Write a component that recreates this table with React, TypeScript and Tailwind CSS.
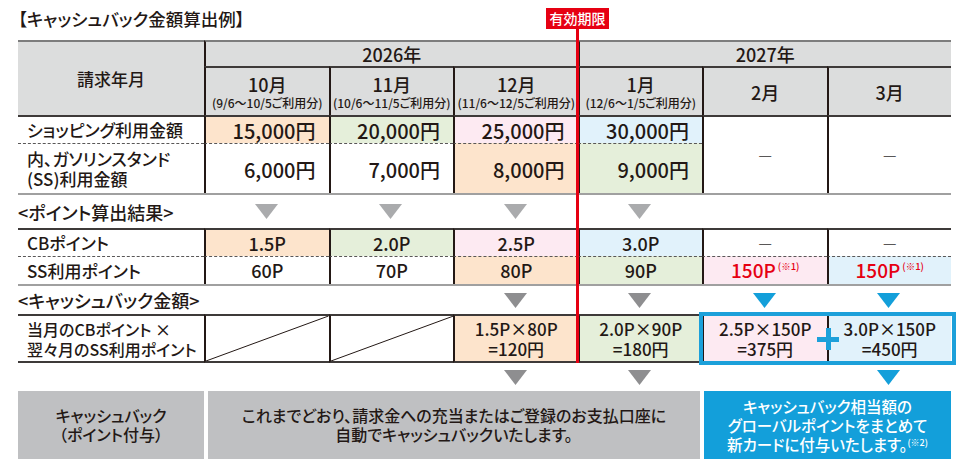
import React from "react";

const INK = "text-[#231815]";
const VL = "border-l-2 border-l-[#231815]";
const T_TOP = "border-t-2 border-t-[#7d7d7d]";
const T_DARK = "border-t-2 border-t-[#3e3a39]";
const T_DASH = "border-t border-t-[#595757] [border-top-style:dashed]";
const T_GRAY = "border-t-2 border-t-[#a0a0a0]";

const ORANGE = "bg-[#fde4cc]";
const GREEN = "bg-[#e5efda]";
const PINK = "bg-[#fdeaf2]";
const BLUE = "bg-[#e1f2fb]";

function Arrow({ color }: { color: string }) {
  return (
    <svg width="23" height="15" viewBox="0 0 23 15">
      <polygon points="0,0 23,0 11.5,15" fill={color} />
    </svg>
  );
}

function Label({ top, children }: { top: string; children: React.ReactNode }) {
  return (
    <div className={`flex items-center whitespace-nowrap pl-[9px] text-[17px] leading-[20px] font-medium ${top}`}>
      {children}
    </div>
  );
}

function Amount({ top, bg, children }: { top: string; bg: string; children: React.ReactNode }) {
  return (
    <div className={`flex items-center justify-end pr-[13px] pt-[2px] text-[20px] font-medium ${VL} ${top} ${bg}`}>
      {children}
    </div>
  );
}

function Pt({ top, bg, children }: { top: string; bg: string; children: React.ReactNode }) {
  return (
    <div className={`flex items-center justify-center text-[18px] font-medium ${VL} ${top} ${bg}`}>
      {children}
    </div>
  );
}

function Dash({ top, span }: { top: string; span?: boolean }) {
  return (
    <div
      className={`flex items-center justify-center text-[15px] text-[#595757] ${VL} ${top} ${
        span ? "row-span-2" : ""
      }`}
    >
      —
    </div>
  );
}

function Red({ top, bg }: { top: string; bg: string }) {
  return (
    <div className={`flex items-center justify-center text-[#e60012] ${VL} ${top} ${bg}`}>
      <span className="text-[19px] font-medium">150P</span>
      <span className="mb-[8px] ml-[2px] text-[9.5px] font-medium">(※1)</span>
    </div>
  );
}

function Formula({ a, b, bg }: { a: string; b: string; bg: string }) {
  return (
    <div
      className={`flex flex-col items-center justify-center text-[17px] leading-[20px] font-medium ${VL} ${T_DARK} border-b-2 border-b-[#3e3a39] ${bg}`}
    >
      <span>{a}</span>
      <span>{b}</span>
    </div>
  );
}

function Diag() {
  return (
    <div className={`relative ${VL} ${T_DARK} border-b-2 border-b-[#3e3a39]`}>
      <svg className="h-full w-full" viewBox="0 0 100 100" preserveAspectRatio="none">
        <line x1="0" y1="100" x2="100" y2="0" stroke="#231815" strokeWidth="1" vectorEffect="non-scaling-stroke" />
      </svg>
    </div>
  );
}

function Month({ m, sub }: { m: string; sub?: string }) {
  return (
    <div className={`flex flex-col items-center justify-center bg-[#dcdddd] ${VL} ${T_DARK}`}>
      <span className="text-[18px] leading-[22px] font-medium">{m}</span>
      {sub && <span className="whitespace-nowrap text-[12px] leading-[15px] font-medium">{sub}</span>}
    </div>
  );
}

const SEC = "flex items-center justify-center";

export default function App() {
  const grayA = "#aaabad";
  const grayB = "#8e8e90";
  const cyan = "#139fda";
  return (
    <div
      className={`relative h-[465px] w-[965px] overflow-hidden bg-white pl-[18px] font-['Noto_Sans_CJK_JP','Noto_Sans',sans-serif] ${INK} [font-feature-settings:'palt']`}
    >
      <div className="h-[40px] pt-[8px] text-[17.5px] leading-[22px] font-medium">【キャッシュバック金額算出例】</div>

      <div className="grid w-[933px] grid-cols-[186px_repeat(6,minmax(0,1fr))] grid-rows-[26px_49px_28px_50px_35px_28px_28px_30px_49px]">
        {/* header */}
        <div className={`row-span-2 flex items-center justify-center bg-[#dcdddd] text-[17px] font-medium ${T_TOP}`}>
          請求年月
        </div>
        <div className={`col-span-3 flex items-center justify-center bg-[#dcdddd] text-[18px] font-medium ${VL} ${T_TOP}`}>
          2026年
        </div>
        <div className={`col-span-3 flex items-center justify-center bg-[#dcdddd] text-[18px] font-medium ${VL} ${T_TOP}`}>
          2027年
        </div>
        <Month m="10月" sub="(9/6〜10/5ご利用分)" />
        <Month m="11月" sub="(10/6〜11/5ご利用分)" />
        <Month m="12月" sub="(11/6〜12/5ご利用分)" />
        <Month m="1月" sub="(12/6〜1/5ご利用分)" />
        <Month m="2月" />
        <Month m="3月" />

        {/* amounts */}
        <Label top={T_DARK}>ショッピング利用金額</Label>
        <Amount top={T_DARK} bg={ORANGE}>15,000円</Amount>
        <Amount top={T_DARK} bg={GREEN}>20,000円</Amount>
        <Amount top={T_DARK} bg={PINK}>25,000円</Amount>
        <Amount top={T_DARK} bg={BLUE}>30,000円</Amount>
        <Dash top={T_DARK} span />
        <Dash top={T_DARK} span />

        <Label top={T_DASH}>
          内、ガソリンスタンド
          <br />
          (SS)利用金額
        </Label>
        <Amount top={T_DASH} bg="bg-white">6,000円</Amount>
        <Amount top={T_DASH} bg="bg-white">7,000円</Amount>
        <Amount top={T_DASH} bg={ORANGE}>8,000円</Amount>
        <Amount top={T_DASH} bg={GREEN}>9,000円</Amount>

        {/* section: points */}
        <div className={`flex items-center pt-[2px] text-[18px] font-medium ${T_GRAY}`}>&lt;ポイント算出結果&gt;</div>
        <div className={`${SEC} ${T_GRAY}`}><Arrow color={grayA} /></div>
        <div className={`${SEC} ${T_GRAY}`}><Arrow color={grayA} /></div>
        <div className={`${SEC} ${T_GRAY}`}><Arrow color={grayA} /></div>
        <div className={`${SEC} ${T_GRAY}`}><Arrow color={grayA} /></div>
        <div className={T_GRAY} />
        <div className={T_GRAY} />

        <Label top={T_DARK}>CBポイント</Label>
        <Pt top={T_DARK} bg={ORANGE}>1.5P</Pt>
        <Pt top={T_DARK} bg={GREEN}>2.0P</Pt>
        <Pt top={T_DARK} bg={PINK}>2.5P</Pt>
        <Pt top={T_DARK} bg={BLUE}>3.0P</Pt>
        <Dash top={T_DARK} />
        <Dash top={T_DARK} />

        <Label top={T_DASH}>SS利用ポイント</Label>
        <Pt top={T_DASH} bg="bg-white">60P</Pt>
        <Pt top={T_DASH} bg="bg-white">70P</Pt>
        <Pt top={T_DASH} bg={ORANGE}>80P</Pt>
        <Pt top={T_DASH} bg={GREEN}>90P</Pt>
        <Red top={T_DASH} bg={PINK} />
        <Red top={T_DASH} bg={BLUE} />

        {/* section: cashback */}
        <div className={`flex items-center text-[18px] font-medium ${T_GRAY}`}>&lt;キャッシュバック金額&gt;</div>
        <div className={T_GRAY} />
        <div className={T_GRAY} />
        <div className={`${SEC} ${T_GRAY}`}><Arrow color={grayB} /></div>
        <div className={`${SEC} ${T_GRAY}`}><Arrow color={grayB} /></div>
        <div className={`${SEC} ${T_GRAY}`}><Arrow color={cyan} /></div>
        <div className={`${SEC} ${T_GRAY}`}><Arrow color={cyan} /></div>

        <div className={`flex items-center whitespace-nowrap pl-[9px] text-[16px] leading-[20px] font-medium ${T_DARK} border-b-2 border-b-[#3e3a39]`}>
          当月のCBポイント ×
          <br />
          翌々月のSS利用ポイント
        </div>
        <Diag />
        <Diag />
        <Formula a="1.5P×80P" b="=120円" bg={ORANGE} />
        <Formula a="2.0P×90P" b="=180円" bg={GREEN} />
        <Formula a="2.5P×150P" b="=375円" bg={PINK} />
        <Formula a="3.0P×150P" b="=450円" bg={BLUE} />
      </div>

      {/* arrows to result */}
      <div className="grid h-[28px] w-[933px] grid-cols-[186px_repeat(6,minmax(0,1fr))] items-center">
        <div />
        <div />
        <div />
        <div className={SEC}><Arrow color={grayB} /></div>
        <div className={SEC}><Arrow color={grayB} /></div>
        <div />
        <div className={SEC}><Arrow color={cyan} /></div>
      </div>

      {/* result boxes */}
      <div className="flex h-[68px] w-[933px] gap-[4px] text-[16px] leading-[19px] font-medium">
        <div className="flex w-[186px] flex-col items-center justify-center bg-[#bfc0c2] text-center">
          <span>キャッシュバック</span>
          <span>（ポイント付与）</span>
        </div>
        <div className="flex w-[492px] flex-col items-center justify-center bg-[#bfc0c2] text-center">
          <span>これまでどおり、請求金への充当またはご登録のお支払口座に</span>
          <span>自動でキャッシュバックいたします。</span>
        </div>
        <div className="flex flex-1 flex-col items-center justify-center bg-[#139fda] text-center text-[15.5px] leading-[19px] text-white">
          <span>キャッシュバック相当額の</span>
          <span>グローバルポイントをまとめて</span>
          <span>
            新カードに付与いたします。<span className="relative -top-[5px] text-[9px] leading-none">(※2)</span>
          </span>
        </div>
      </div>

      {/* expiry marker */}
      <div className="absolute left-[576px] top-[29px] h-[334px] w-[3px] bg-[#e60012]" />
      <div className="absolute left-[546px] top-[8px] flex h-[21px] w-[63px] items-center justify-center bg-[#e60012] text-[14px] font-medium text-white">
        有効期限
      </div>

      {/* combined frame for Feb/Mar */}
      <div className="absolute left-[699px] top-[312px] h-[53px] w-[257px] border-4 border-[#1ca0da]" />
      <div className="absolute left-[817px] top-[337px] h-[5px] w-[22px] bg-[#1ca0da]" />
      <div className="absolute left-[826px] top-[328px] h-[22px] w-[5px] bg-[#1ca0da]" />
    </div>
  );
}
